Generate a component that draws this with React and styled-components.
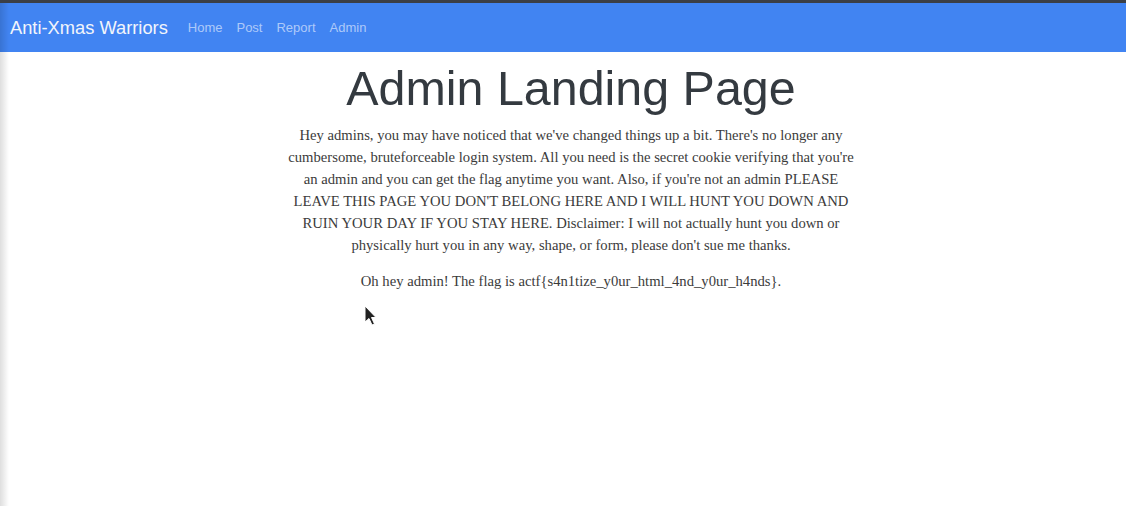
import styled, { createGlobalStyle } from "styled-components"

const GlobalStyle = createGlobalStyle`
  html, body {
    margin: 0;
    padding: 0;
    background: #fff;
  }
  body {
    font-family: "Liberation Serif", "Times New Roman", serif;
  }
`

const Page = styled.div`
  position: relative;
  width: 1126px;
  height: 506px;
  overflow: hidden;
  background: #fff;
  border-top: 3px solid #3b3f46;
  box-sizing: border-box;

  &::before {
    content: "";
    position: absolute;
    left: 0;
    top: 0;
    bottom: 0;
    width: 9px;
    background: linear-gradient(to right, rgba(0, 0, 0, 0.13), rgba(0, 0, 0, 0));
    pointer-events: none;
  }
`

const Navbar = styled.nav`
  display: flex;
  align-items: center;
  height: 49px;
  padding: 0 10px;
  background: #4184f2;
  font-family: "Liberation Sans", Arial, sans-serif;
`

const Brand = styled.a`
  font-size: 18.3px;
  color: #f2f5fb;
  margin-right: 13px;
  text-decoration: none;
`

const NavLinks = styled.ul`
  display: flex;
  list-style: none;
  margin: 0;
  padding: 0;
`

const NavLink = styled.a`
  display: block;
  padding: 0 7px;
  font-size: 13px;
  color: rgba(255, 255, 255, 0.58);
  text-decoration: none;
`

const Main = styled.main`
  display: flex;
  flex-direction: column;
  align-items: center;
  padding-left: 16px;
`

const Title = styled.h1`
  margin: 7px 0 7px;
  font-family: "Liberation Sans", Arial, sans-serif;
  font-weight: 400;
  font-size: 48.4px;
  line-height: 1.2;
  color: #343a40;
`

const Text = styled.p`
  max-width: 572px;
  margin: 0 0 14px;
  font-size: 14.67px;
  line-height: 22px;
  text-align: center;
  color: #3b3b3b;
`

const Cursor = styled.svg`
  position: absolute;
  left: 364px;
  top: 302px;
`

const links = ["Home", "Post", "Report", "Admin"]

const App = () => {
  return (
    <Page>
      <GlobalStyle />
      <Navbar>
        <Brand href="#">Anti-Xmas Warriors</Brand>
        <NavLinks>
          {links.map((l) => (
            <li key={l}>
              <NavLink href="#">{l}</NavLink>
            </li>
          ))}
        </NavLinks>
      </Navbar>
      <Main>
        <Title>Admin Landing Page</Title>
        <Text>
          Hey admins, you may have noticed that we've changed things up a bit. There's no longer any
          cumbersome, bruteforceable login system. All you need is the secret cookie verifying that
          you're an admin and you can get the flag anytime you want. Also, if you're not an admin
          PLEASE LEAVE THIS PAGE YOU DON'T BELONG HERE AND I WILL HUNT YOU DOWN AND RUIN YOUR DAY IF
          YOU STAY HERE. Disclaimer: I will not actually hunt you down or physically hurt you in any
          way, shape, or form, please don't sue me thanks.
        </Text>
        <Text>Oh hey admin! The flag is actf{"{"}s4n1tize_y0ur_html_4nd_y0ur_h4nds{"}"}.</Text>
      </Main>
      <Cursor width="13" height="22" viewBox="0 0 13 22">
        <path d="M1 1 L1 17 L5 13.5 L8 20 L10.5 19 L7.5 12.5 L12 12.5 Z" fill="#222" stroke="#fff" strokeWidth="1" />
      </Cursor>
    </Page>
  )
}

export default App
